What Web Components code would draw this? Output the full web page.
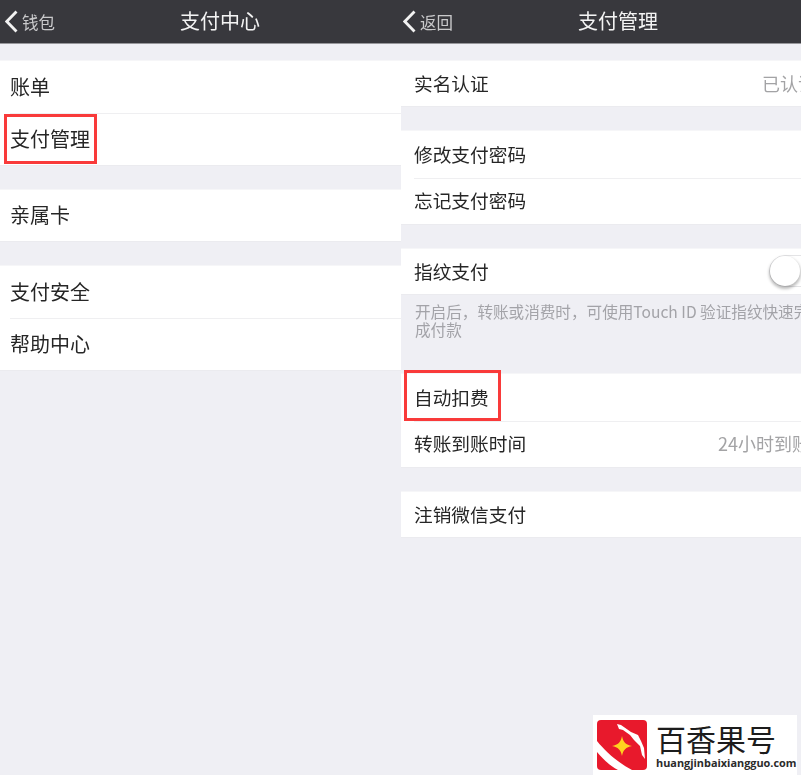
<!DOCTYPE html>
<html lang="zh-CN">
<head>
<meta charset="utf-8">
<title>支付管理</title>
<style>
  html, body { margin: 0; height: 775px; overflow: hidden; background: #efeff4; }
  body { display: flex; position: relative; font-family: "Noto Sans CJK SC", "Noto Sans", sans-serif; }
</style>
</head>
<body>
<pay-pane title="支付中心" back="钱包" style="--row-font: 20px; --inset: 10px; --nav-pad: 5px; --title-x: 180px; --row-h: 52px; flex: 0 0 401px">
  <pay-group>
    <pay-row>账单</pay-row>
    <pay-row mark="1" style="--mark-l: 4px; --mark-w: 93px; --mark-t: 1px; --mark-b: 1px">支付管理</pay-row>
  </pay-group>
  <pay-group gap="23" style="--row-h: 51px"><pay-row>亲属卡</pay-row></pay-group>
  <pay-group gap="23">
    <pay-row>支付安全</pay-row>
    <pay-row>帮助中心</pay-row>
  </pay-group>
</pay-pane>
<pay-pane title="支付管理" back="返回" style="--row-font: 18.7px; --inset: 13px; --nav-pad: 2px; --title-x: 177px; --row-h: 46.5px; flex: 0 0 400px">
  <pay-group style="--row-h: 45px">
    <pay-row value="已认证" cut="15">实名认证</pay-row>
  </pay-group>
  <pay-group gap="23">
    <pay-row>修改支付密码</pay-row>
    <pay-row>忘记支付密码</pay-row>
  </pay-group>
  <pay-group gap="23" style="--row-h: 45px">
    <pay-row><pay-switch slot="end"></pay-switch>指纹支付</pay-row>
  </pay-group>
  <pay-note>开启后，转账或消费时，可使用Touch ID 验证指纹快速完成付款</pay-note>
  <pay-group gap="0">
    <pay-row mark="1" style="--mark-l: 3px; --mark-w: 97px; --mark-t: -4px; --mark-b: 0px">自动扣费</pay-row>
    <pay-row value="24小时到账" cut="9">转账到账时间</pay-row>
  </pay-group>
  <pay-group gap="23" style="--row-h: 45px"><pay-row>注销微信支付</pay-row></pay-group>
</pay-pane>
<site-mark></site-mark>

<script>
class PayPane extends HTMLElement {
  constructor() {
    super();
    this.attachShadow({ mode: 'open' });
    this.shadowRoot.innerHTML = `
<style>
  :host { display: block; min-width: 0; overflow: hidden; }
  header {
    height: 43px; background: #38383d; border-bottom: 1px solid #97979b;
    display: grid; grid-template-columns: var(--title-x) auto; align-items: center; color: #f4f4f4;
  }
  .back { display: flex; align-items: center; font-size: 16.5px; color: #c9c9cb; padding-left: var(--nav-pad); filter: blur(.35px); }
  .back svg { width: 14px; height: 24px; margin-right: 3px; }
  h1 { margin: 0 0 2px; font-size: 20px; font-weight: 400; line-height: 1; filter: blur(.35px); }
  main { padding-top: 16px; }
</style>
<header>
  <div class="back">
    <svg viewBox="0 0 14 24"><path d="M11.500 1.500 1.800 11.500l9.700 10" fill="none" stroke="#f2f2f2" stroke-width="2.800"/></svg>
    <span>${this.getAttribute('back')}</span>
  </div>
  <h1>${this.getAttribute('title')}</h1>
</header>
<main><slot></slot></main>`;
  }
}

class PayGroup extends HTMLElement {
  constructor() {
    super();
    this.attachShadow({ mode: 'open' });
    this.shadowRoot.innerHTML = `
<style>
  :host { display: block; background: #fff; border-top: 1px solid #f6f6f8; border-bottom: 1px solid #ebebef; box-sizing: border-box; }
  ::slotted(pay-row:not(:first-child)) { --line: #efeff1; }
</style>
<slot></slot>`;
    this.style.marginTop = (this.getAttribute('gap') || 0) + 'px';
  }
}

class PayRow extends HTMLElement {
  constructor() {
    super();
    this.attachShadow({ mode: 'open' });
    const value = this.getAttribute('value');
    const cut = this.getAttribute('cut') || 0;
    this.shadowRoot.innerHTML = `
<style>
  :host { display: block; position: relative; }
  .row {
    height: var(--row-h); box-sizing: border-box; padding: 0 0 2px var(--inset);
    display: flex; align-items: center; justify-content: space-between;
    font-size: var(--row-font); color: #262626; white-space: nowrap;
  }
  .row > span { filter: blur(.35px); }
  .line { position: absolute; top: 0; left: var(--inset); right: 0; height: 1px; background: var(--line, transparent); }
  .row > .value { font-size: 18px; color: #a3a3a5; margin-right: -${cut}px; }
  .mark {
    position: absolute; top: var(--mark-t); bottom: var(--mark-b); left: var(--mark-l); width: var(--mark-w);
    border: 3px solid #f93a3a; box-sizing: border-box;
  }
</style>
<div class="line"></div>
<div class="row">
  <span><slot></slot></span>
  ${value ? `<span class="value">${value}</span>` : '<slot name="end"></slot>'}
</div>
${this.hasAttribute('mark') ? '<div class="mark"></div>' : ''}`;
  }
}

class PaySwitch extends HTMLElement {
  constructor() {
    super();
    this.attachShadow({ mode: 'open' });
    this.shadowRoot.innerHTML = `
<style>
  :host { display: block; width: 31px; height: 32px; margin-right: 1px; }
  .track { width: 50px; height: 30px; border: 1px solid #e4e4e6; border-radius: 16px; background: #fff; }
  .knob { width: 30px; height: 30px; border-radius: 50%; background: #fff; box-shadow: 0 2px 3px 1px rgba(0,0,0,.26); }
</style>
<div class="track"><div class="knob"></div></div>`;
  }
}

class PayNote extends HTMLElement {
  constructor() {
    super();
    this.attachShadow({ mode: 'open' });
    this.shadowRoot.innerHTML = `
<style>
  :host { display: block; height: 78px; box-sizing: border-box; padding-top: 7px; overflow: hidden; }
  p { margin: 0; width: 396px; padding-left: 14px; font-size: 15.600px; line-height: 18px; color: #a3a3a8; filter: blur(.35px); }
</style>
<p><slot></slot></p>`;
  }
}

class SiteMark extends HTMLElement {
  constructor() {
    super();
    this.attachShadow({ mode: 'open' });
    this.shadowRoot.innerHTML = `
<style>
  :host { position: absolute; left: 593px; top: 715px; width: 204px; height: 60px; background: #fff; display: flex; padding: 5px 0 0 4px; box-sizing: border-box; }
  svg { width: 50px; height: 50px; flex: none; }
  .txt { margin-left: 9px; display: flex; flex-direction: column; color: #1c1c1c; }
  b { font: 400 30px/36px "Noto Sans CJK SC", sans-serif; }
  small { font: 700 10.900px/14px "Open Sans", sans-serif; color: #2b2b2b; white-space: nowrap; }
</style>
<svg viewBox="0 0 50 50">
  <rect width="50" height="50" rx="4" fill="#e8192c"/>
  <path d="M0 21 C8 31 20 42 35 50 H21 C12 45 6 39 0 32Z" fill="#fff"/>
  <path d="M20 4 24 5 34 12 41 15 44 21 47 28 48 39 45 35 43 26 37 20 33 15 26 10 22 9Z" fill="#fff"/>
  <path d="M25 16 C26 22 29 25 35 26 29 27 26 30 25 36 24 30 21 27 15 26 21 25 24 22 25 16Z" fill="#ffd21f"/>
</svg>
<div class="txt"><b>百香果号</b><small>huangjinbaixiangguo.com</small></div>`;
  }
}

customElements.define('pay-pane', PayPane);
customElements.define('pay-group', PayGroup);
customElements.define('pay-row', PayRow);
customElements.define('pay-switch', PaySwitch);
customElements.define('pay-note', PayNote);
customElements.define('site-mark', SiteMark);
</script>
</body>
</html>
